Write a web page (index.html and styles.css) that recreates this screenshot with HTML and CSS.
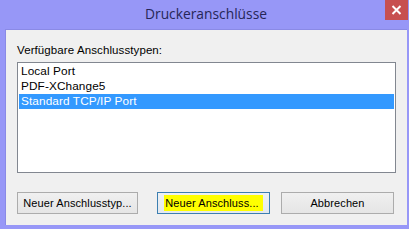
FILE: index.html
```html
<!DOCTYPE html>
<html>
<head>
<meta charset="utf-8">
<link rel="stylesheet" href="styles.css">
</head>
<body>
<div class="window">
  <div class="titlebar">
    <div class="title">Druckeranschlüsse</div>
    <div class="close"><svg width="11" height="10" viewBox="0 0 11 10"><path d="M1.5 1 L9.5 9 M9.5 1 L1.5 9" stroke="#fff" stroke-width="2"/></svg></div>
  </div>
  <div class="client">
    <div class="label">Verfügbare Anschlusstypen:</div>
    <div class="list">
      <div class="item">Local Port</div>
      <div class="item">PDF-XChange5</div>
      <div class="item selected">Standard TCP/IP Port</div>
    </div>
    <div class="buttons">
      <div class="btn b1">Neuer Anschlusstyp...</div>
      <div class="btn b2 default"><span class="mark">Neuer Anschluss...</span></div>
      <div class="btn b3">Abbrechen</div>
    </div>
  </div>
</div>
</body>
</html>
```
FILE: styles.css
```css
html, body { margin: 0; padding: 0; }
body { width: 409px; height: 229px; overflow: hidden; background: #9797f7; }
.window {
  width: 409px; height: 229px; box-sizing: border-box;
  background: #9797f7;
  display: flex; flex-direction: column;
  padding: 0 2px 4px 5px;
}
.titlebar {
  position: relative;
  height: 29px; flex: none;
}
.title {
  text-align: center;
  font-family: "Open Sans", "Noto Sans", sans-serif;
  font-size: 13.8px;
  color: #262656;
  line-height: 27px;
}
.close {
  position: absolute; right: -1px; top: 0;
  width: 23px; height: 20px;
  background: #c75050;
  display: flex; align-items: center; justify-content: center;
}
.client {
  flex: 1;
  background: #f0f0f0;
  border-top: 1px solid #8a8ae6;
  border-left: 1px solid #8a8ae6;
  display: flex; flex-direction: column;
  padding: 0 11px 0 11px;
  font-family: "Liberation Sans", Arial, sans-serif;
  font-size: 11.5px;
  color: #000;
}
.label {
  margin-top: 13px;
  line-height: 14px;
  height: 18px;
  letter-spacing: 0.1px;
}
.list {
  margin-top: 1px;
  height: 107px;
  border: 1px solid #828790;
  background: #fff;
  padding: 1px;
  font-size: 11.8px;
}
.item {
  height: 15px; line-height: 15px;
  padding-left: 2px;
  letter-spacing: 0.1px;
}
.selected { background: #3399ff; color: #fff; }
.buttons {
  display: flex;
  margin-top: 19px;
  font-size: 11px;
}
.btn {
  height: 20px; box-sizing: content-box;
  border: 1px solid #acacac;
  background: linear-gradient(#f0f0f0, #e5e5e5);
  display: flex; align-items: center; justify-content: center;
  line-height: 14px;
  letter-spacing: 0.1px;
}
.b1 { width: 119px; }
.b2 { width: 111px; margin-left: 19px; }
.b3 { width: 111px; margin-left: 11px; }
.default { border-color: #3c7fb1; background: linear-gradient(#eef1f4, #e3e8ee); }
.mark { background: #ffff00; padding: 1px 4px 1px 1px; }
```
